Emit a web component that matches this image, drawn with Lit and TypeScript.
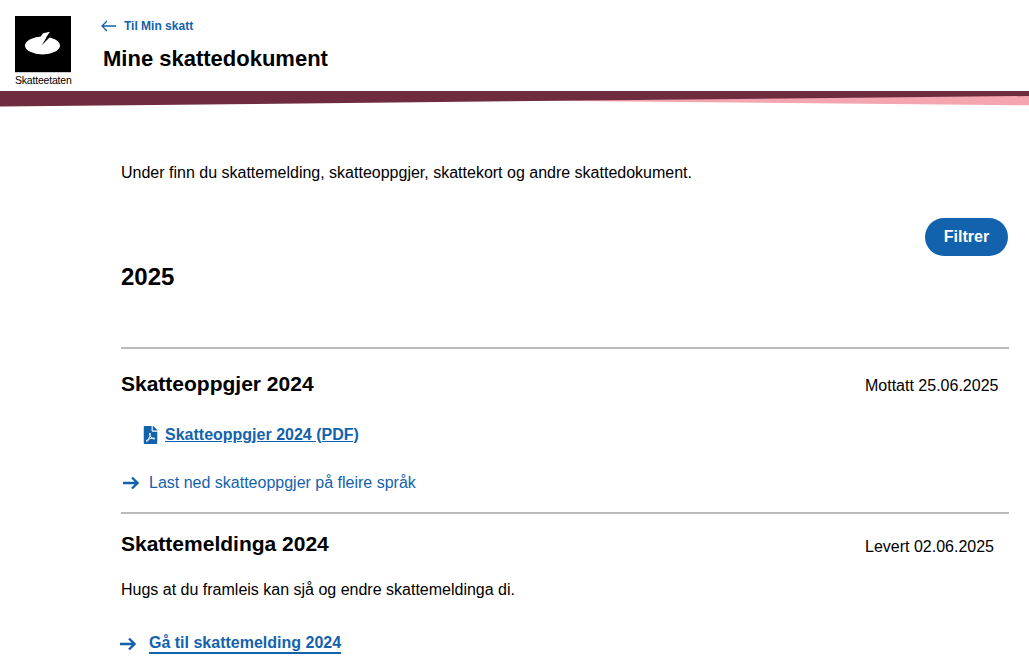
import { LitElement, html, css } from 'lit';
import { customElement } from 'lit/decorators.js';

const arrowRight = html`<svg class="arrow" width="18" height="14" viewBox="0 0 18 14" fill="none" stroke="currentColor" stroke-width="2.400"><path d="M2 7h14.500M11 1.500 16.500 7 11 12.500" /></svg>`;

@customElement('app-root')
export class AppRoot extends LitElement {
  static styles = css`
    :host {
      display: block;
      font-family: 'Liberation Sans', Arial, sans-serif;
      font-size: 16px;
      color: #000;
      background: #fff;
    }

    a {
      color: #1362ae;
    }

    .header {
      display: flex;
      height: 91px;
      padding: 16px 0 0 15px;
      box-sizing: border-box;
      gap: 30px;
    }

    .logo {
      width: 57px;
    }

    .logo-mark {
      display: block;
      width: 56px;
      height: 56px;
      border-bottom: 1px solid #ccc;
    }

    .logo-text {
      display: block;
      margin-top: 1px;
      font-size: 10.5px;
      line-height: 12px;
      white-space: nowrap;
      letter-spacing: -0.2px;
    }

    .back {
      display: flex;
      align-items: center;
      gap: 8px;
      height: 20px;
      margin-left: -1px;
      font-size: 12px;
      font-weight: 700;
      text-decoration: none;
    }

    .title {
      margin: 8px 0 0 1px;
      font-size: 22px;
      line-height: 30px;
      font-weight: 700;
    }

    .ribbon {
      display: block;
      width: 100%;
      height: 16px;
    }

    .content {
      padding: 56px 20px 0 121px;
    }

    .intro {
      margin: 0;
      line-height: 19px;
    }

    .filter-row {
      display: flex;
      justify-content: flex-end;
      margin-top: 36px;
      margin-right: 1px;
    }

    .filter {
      height: 38px;
      width: 83px;
      border: 0;
      border-radius: 19px;
      padding: 0;
      background: #1362ae;
      color: #fff;
      font: 700 16px 'Liberation Sans', Arial, sans-serif;
    }

    .year {
      margin: 5px 0 0;
      font-size: 24px;
      line-height: 32px;
      font-weight: 700;
    }

    .doc {
      border-top: 2px solid #bbb;
    }

    .doc.first {
      margin-top: 54px;
    }

    .doc-head {
      display: grid;
      grid-template-columns: 1fr 144px;
      align-items: center;
      height: 30px;
    }

    .doc.first .doc-head {
      margin-top: 20px;
    }

    .doc.second .doc-head {
      margin-top: 15px;
    }

    .doc-title {
      margin: 0;
      font-size: 21px;
      line-height: 30px;
      font-weight: 700;
    }

    .doc-date {
      padding-top: 4px;
    }

    .doc.second .doc-date {
      padding-top: 6px;
    }

    .pdf {
      display: flex;
      align-items: center;
      gap: 7px;
      margin: 26px 0 0 22px;
      height: 20px;
    }

    .pdf a {
      font-weight: 700;
    }

    .more {
      display: flex;
      align-items: center;
      gap: 10px;
      height: 20px;
      margin-top: 28px;
      padding-bottom: 19px;
      color: #1362ae;
    }

    .more a {
      text-decoration: none;
    }

    .note {
      margin: 21px 0 0;
      line-height: 19px;
    }

    .goto {
      display: flex;
      align-items: center;
      gap: 13px;
      margin: 35px 0 0 -3px;
      color: #1362ae;
      height: 20px;
    }

    .goto a {
      font-weight: 700;
      text-decoration: none;
      border-bottom: 2px solid #1362ae;
      line-height: 18px;
    }
  `;

  render() {
    return html`
      <header class="header">
        <div class="logo">
          <svg class="logo-mark" viewBox="0 0 56 56">
            <rect width="56" height="56" fill="#000" />
            <ellipse cx="27.500" cy="29.500" rx="17.500" ry="9" fill="#fff" />
            <polygon points="26.500,29.500 31.700,20.500 36,20" fill="#000" />
            <polygon points="25,21.500 28,17.300 35,15.700 31.700,20.500 26.500,29.500" fill="#fff" />
          </svg>
          <span class="logo-text">Skatteetaten</span>
        </div>
        <div>
          <a class="back" href="#">
            <svg width="15" height="12" viewBox="0 0 15 12" fill="none" stroke="currentColor" stroke-width="1.300"><path d="M15 6H1M6 1 1 6l5 5" /></svg>
            Til Min skatt
          </a>
          <h1 class="title">Mine skattedokument</h1>
        </div>
      </header>
      <svg class="ribbon" viewBox="0 0 1029 16" preserveAspectRatio="none">
        <polygon points="540,9.800 1029,14.300 1029,4" fill="#f4a6b0" />
        <polygon points="0,0 1029,0 1029,5 0,15.500" fill="#6f2c3e" />
      </svg>
      <main class="content">
        <p class="intro">Under finn du skattemelding, skatteoppgjer, skattekort og andre skattedokument.</p>
        <div class="filter-row"><button class="filter">Filtrer</button></div>
        <h2 class="year">2025</h2>
        <section class="doc first">
          <div class="doc-head">
            <h3 class="doc-title">Skatteoppgjer 2024</h3>
            <span class="doc-date">Mottatt 25.06.2025</span>
          </div>
          <div class="pdf">
            <svg width="15" height="18" viewBox="0 0 384 512" fill="#1362ae"><path d="M181.900 256.100c-5-16-4.900-46.900-2-46.900 8.400 0 7.600 36.900 2 46.900zm-1.700 47.200c-7.700 20.200-17.300 43.300-28.400 62.700 18.300-7 39-17.200 62.900-21.900-12.700-9.600-24.900-23.400-34.500-40.800zM86.100 428.100c0 .8 13.200-5.400 34.900-40.200-6.700 6.300-29.100 24.500-34.900 40.200zM248 160h136v328c0 13.300-10.700 24-24 24H24c-13.300 0-24-10.700-24-24V24C0 10.700 10.700 0 24 0h200v136c0 13.200 10.800 24 24 24zm-8 171.800c-20-12.200-33.300-29-42.700-53.800 4.500-18.500 11.600-46.600 6.200-64.200-4.700-29.400-42.400-26.500-47.800-6.800-5 18.300-.4 44.100 8.100 77-11.600 27.600-28.700 64.600-40.800 85.800-.1 0-.1.100-.2.100-27.100 13.900-73.600 44.500-54.500 68 5.600 6.900 16 10 21.500 10 17.900 0 35.700-18 61.100-61.800 25.800-8.500 54.100-19.100 79-23.200 21.700 11.800 47.100 19.500 64 19.500 29.200 0 31.200-32 19.700-43.400-13.900-13.600-54.300-9.700-73.600-7.200zM377 105L279 7c-4.500-4.500-10.600-7-17-7h-6v128h128v-6.100c0-6.300-2.500-12.400-7-16.900zm-74.100 255.300c4.100-2.700-2.500-11.900-42.800-9 37.100 15.800 42.800 9 42.800 9z" /></svg>
            <a href="#">Skatteoppgjer 2024 (PDF)</a>
          </div>
          <div class="more">${arrowRight}<a href="#">Last ned skatteoppgjer på fleire språk</a></div>
        </section>
        <section class="doc second">
          <div class="doc-head">
            <h3 class="doc-title">Skattemeldinga 2024</h3>
            <span class="doc-date">Levert 02.06.2025</span>
          </div>
          <p class="note">Hugs at du framleis kan sjå og endre skattemeldinga di.</p>
          <div class="goto">${arrowRight}<a href="#">Gå til skattemelding 2024</a></div>
        </section>
      </main>
    `;
  }
}
